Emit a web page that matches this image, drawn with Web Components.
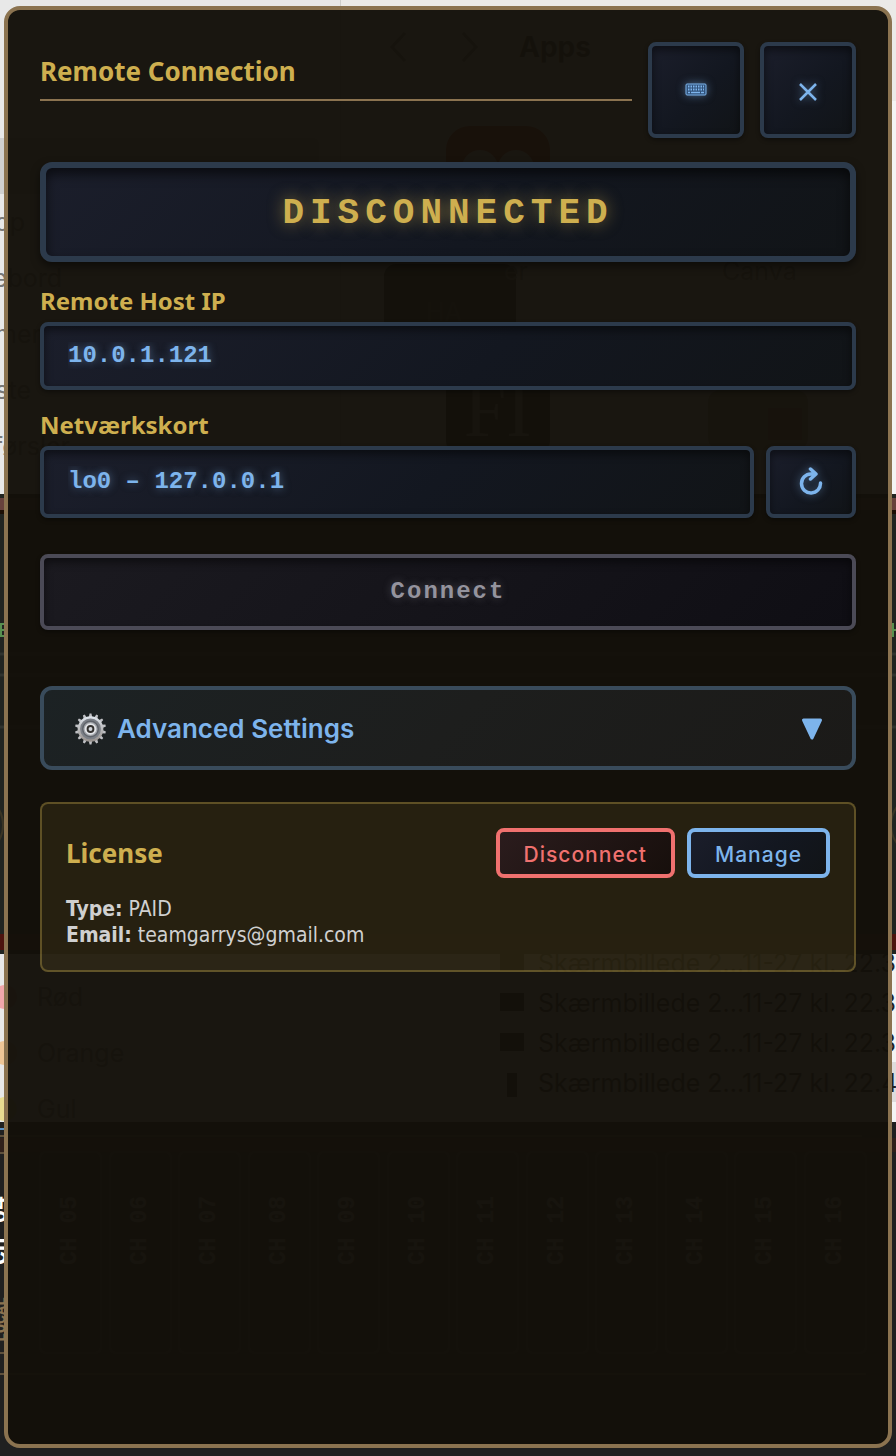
<!DOCTYPE html>
<html lang="da">
<head>
<meta charset="utf-8">
<meta name="viewport" content="width=device-width, initial-scale=1">
<title>Remote Connection</title>
<style>
    * { box-sizing: border-box; }
    body { margin: 0; background: #202020; font-family: "Noto Sans", "Open Sans", sans-serif;
        --gold: #ceaf4f; --blue: #7db4ec; --red: #f0716f; --edge: #2c3a4b; --brass: #8b7350;
        --ui: Inter, "Liberation Sans", sans-serif; --mono: "Liberation Mono", monospace;
        --glass: linear-gradient(135deg, #1b1e2b 0%, #131720 55%, #111417 100%);
        --sunk: inset 0 4px 8px rgba(0,0,0,0.5), 0 2px 4px rgba(0,0,0,0.4); }
</style>
</head>
<body>
<remote-app></remote-app>

<script>
// Windows that lie behind the translucent panel
class DesktopBackdrop extends HTMLElement {
    connectedCallback() {
        const channels = ['05', '06', '07', '08', '09', '10', '11', '12', '13', '14', '15', '16'];
        const strips = channels.map((n, i) => {
            const x = Math.round(40 + i * 69.5);
            return `<rect x="${x}" y="1152" width="61" height="201" rx="6" fill="#202020" stroke="#3a3a38" stroke-width="2"/>
                <text class="ch" transform="translate(${x + 36} 1265) rotate(-90)">CH ${n}</text>`;
        }).join('');
        const files = [963, 1003, 1043, 1083].map((y, i) => `
            <rect x="${i === 3 ? 507 : 500}" y="${y - 10}" width="${i === 3 ? 10 : 24}" height="${i === 3 ? 24 : 18}" fill="#222"/>
            <text x="538" y="${y + 9}" fill="#222">Skærmbillede 2...11-27 kl. 22.${i === 3 ? 4 : 3}</text>`).join('');

        this.attachShadow({ mode: 'open' });
        this.shadowRoot.innerHTML = `
            <style>
                :host { display:block; position:absolute; inset:0; overflow:hidden; z-index:-1; }
                svg { display:block; width:100%; height:100%; }
                text { font-family:var(--ui); font-size:25px; }
                .end { text-anchor:end; fill:#777; }
                .ch { font-family:var(--mono); font-size:23px; font-weight:700; fill:#b0b0b0; }
            </style>
            <svg viewBox="0 0 896 1456" preserveAspectRatio="xMinYMin slice" aria-hidden="true">
                <rect width="896" height="1456" fill="#202020"/>
                <rect width="341" height="494" fill="#e8e8e8"/>
                <rect x="341" width="555" height="494" fill="#ebeae8"/>
                <rect x="340" width="1" height="494" fill="#cfcfcd"/>
                <rect x="341" y="101" width="555" height="393" fill="#f4f4f4"/>
                <rect x="-10" y="138" width="329" height="56" rx="6" fill="#d0d0d0"/>
                <path d="M405 33l-13 14 13 14M463 33l13 14-13 14" fill="none" stroke="#777" stroke-width="3"/>
                <text x="519" y="57" style="font-size:28px" font-weight="700" fill="#444">Apps</text>
                <rect x="446" y="126" width="104" height="104" rx="24" fill="#d32a10"/>
                <circle cx="480" cy="168" r="18" fill="#eee"/><circle cx="516" cy="168" r="18" fill="#eee"/>
                <rect x="384" y="264" width="132" height="92" rx="12" fill="#333"/>
                <text x="528" y="280" class="end">er</text>
                <text x="722" y="280" fill="#777">Canva</text>
                <text x="426" y="321" fill="#666">HA</text>
                <rect x="446" y="340" width="104" height="110" rx="8" fill="#222"/>
                <text x="464" y="436" fill="#999" style="font:76px 'Liberation Serif', serif">FI</text>
                <rect x="708" y="390" width="100" height="60" rx="12" fill="#a09a90"/>
                <rect x="768" y="408" width="34" height="32" fill="#c0392b" opacity="0.5"/>
                <text x="25" y="231" class="end">AirDrop</text>
                <text x="62" y="287" class="end">Skrivebord</text>
                <text x="41" y="343" class="end">Programmer</text>
                <text x="31" y="399" class="end">Seneste</text>
                <text x="70" y="455" class="end">Overførsler</text>

                <rect y="494" width="896" height="460" fill="#212421"/>
                <rect y="498" width="896" height="13" fill="#67413c"/>
                <rect y="510" width="896" height="4" fill="#1c0e04"/>
                <path d="M0 654h896M0 675h896M0 727h896" stroke="#30332f" stroke-width="3"/>
                <path d="M0 624h4M0 630h4M0 636h4M1 623v14M893 623v14M892 630h4" stroke="#589050" stroke-width="2"/>
                <circle cx="-28" cy="825" r="31" fill="none" stroke="#3a3424" stroke-width="2"/>
                <circle cx="922" cy="825" r="31" fill="none" stroke="#3a3424" stroke-width="2"/>
                <rect y="934" width="896" height="16" fill="#4c130e"/>

                <rect y="954" width="470" height="168" fill="#e8e8e8"/>
                <rect x="442" y="954" width="454" height="168" fill="#f4f4f4"/>
                <rect x="466" y="1062" width="430" height="40" fill="#dedcdc"/>
                <circle cx="5" cy="997" r="12" fill="#f2a7ab"/>
                <circle cx="5" cy="1053" r="12" fill="#eec697"/>
                <circle cx="5" cy="1109" r="12" fill="#e9dc91"/>
                <g fill="#777"><text x="37" y="1006">Rød</text><text x="37" y="1062">Orange</text><text x="37" y="1118">Gul</text></g>
                ${files}

                <rect y="1122" width="896" height="334" fill="#202020"/>
                <path d="M0 1129h4" stroke="#5b91c4" stroke-width="2"/>
                <rect y="1138" width="896" height="14" fill="#30201a"/>
                <path d="M0 1136h862M0 1153h4M0 1353h4M0 1374h866" stroke="#8b7350" stroke-width="2" opacity="0.6"/>
                <text class="ch" style="fill:#fff" transform="translate(6 1265) rotate(-90)">CH 04</text>
                <text class="ch" style="fill:#8b7350;font-size:15px" transform="translate(5 1342) rotate(-90)">LOCAL</text>
                ${strips}
            </svg>
        `;
    }
}
customElements.define('desktop-backdrop', DesktopBackdrop);

class IconButton extends HTMLElement {
    connectedCallback() {
        this.attachShadow({ mode: 'open' });
        this.shadowRoot.innerHTML = `
            <style>
                :host { display:block; flex:none; width:96px; height:96px; }
                button { box-sizing:border-box; width:100%; height:100%; padding:0; display:flex; align-items:center; justify-content:center;
                    border:4px solid var(--edge); border-radius:8px; background:var(--glass); box-shadow:var(--sunk);
                    color:var(--blue); cursor:pointer; }
                ::slotted(svg) { display:block; filter:drop-shadow(0 0 4px rgba(125,180,236,0.5)); }
            </style>
            <button type="button" aria-label="${this.getAttribute('label')}"><slot></slot></button>
        `;
    }
}
customElements.define('icon-button', IconButton);

class PanelHeader extends HTMLElement {
    connectedCallback() {
        this.attachShadow({ mode: 'open' });
        this.shadowRoot.innerHTML = `
            <style>
                :host { display:flex; align-items:flex-start; gap:16px; }
                h1 { flex:1; margin:12px 0 0; padding-bottom:11px; border-bottom:2px solid var(--brass);
                    font-size:26px; line-height:34px; font-weight:700; color:var(--gold); }
            </style>
            <h1>Remote Connection</h1>
            <icon-button label="Keyboard">
                <svg width="22" height="22" viewBox="0 0 22 22" fill="none" stroke="currentColor">
                    <rect x="1" y="5" width="20" height="11" rx="1" fill="#31527a" stroke-width="1"/>
                    <path d="M3 7.500h16M3 10.500h16" stroke-dasharray="1.500 1" stroke-width="2"/>
                    <path d="M3 13.500h2M6 13.500h9M16 13.500h3" stroke-width="1.500"/>
                </svg>
            </icon-button>
            <icon-button label="Close">
                <svg width="18" height="22" viewBox="0 0 18 22" fill="none" stroke="currentColor" stroke-width="2.500">
                    <path d="M1 5l16 16M17 5L1 21"/>
                </svg>
            </icon-button>
        `;
    }
}
customElements.define('panel-header', PanelHeader);

class StatusDisplay extends HTMLElement {
    connectedCallback() {
        this.attachShadow({ mode: 'open' });
        this.shadowRoot.innerHTML = `
            <style>
                :host { display:block; box-sizing:border-box; margin-top:24px; padding:26px 20px 22px; border:6px solid var(--edge); border-radius:12px;
                    background:var(--glass); box-shadow:inset 0 6px 12px rgba(0,0,0,0.6), 0 4px 8px rgba(0,0,0,0.5);
                    font:700 36px/40px var(--mono); letter-spacing:6px; text-align:center;
                    color:var(--gold); text-shadow:0 0 16px rgba(206,175,79,0.6); }
            </style>
            <span role="status"><slot></slot></span>
        `;
    }
}
customElements.define('status-display', StatusDisplay);

class ConnectionForm extends HTMLElement {
    connectedCallback() {
        this.attachShadow({ mode: 'open' });
        this.shadowRoot.innerHTML = `
            <style>
                :host { display:block; margin-top:24px; }
                form { display:flex; flex-direction:column; }
                label { font-size:24px; line-height:30px; margin-bottom:6px; font-weight:700; color:var(--gold); }
                input, select { box-sizing:border-box; appearance:none; -webkit-appearance:none; min-width:0; margin:0; padding:0 24px;
                    border:4px solid var(--edge); border-radius:8px; background:var(--glass); box-shadow:var(--sunk);
                    font:700 24px/32px var(--mono); color:var(--blue); text-shadow:0 0 8px rgba(125,180,236,0.5); }
                input { height:68px; margin-bottom:20px; padding-bottom:2px; }
                .row { display:flex; gap:12px; }
                select { flex:1; height:72px; }
                icon-button { width:90px; height:72px; }
                .connect { height:76px; margin-top:36px; padding:0; border:4px solid #4b4a56; border-radius:8px;
                    background:linear-gradient(135deg, #1b1a20, #0f0e14); box-shadow:var(--sunk);
                    font:700 24px/32px var(--mono); letter-spacing:2px; color:#94939d; text-shadow:0 0 8px rgba(148,147,157,0.4); }
            </style>
            <form>
                <label for="host">Remote Host IP</label>
                <input id="host" type="text" value="10.0.1.121">
                <label for="nic">Netværkskort</label>
                <div class="row">
                    <select id="nic"><option>lo0 – 127.0.0.1</option></select>
                    <icon-button label="Refresh">
                        <svg width="26" height="30" viewBox="0 0 26 30" fill="none" stroke="currentColor" stroke-width="3.500" stroke-linecap="round" stroke-linejoin="round">
                            <path d="M17 7H13A9.500 9.500 0 1 0 22.500 16M12.500 2L18 7L12.500 12"/>
                        </svg>
                    </icon-button>
                </div>
                <button class="connect" type="button" disabled>Connect</button>
            </form>
        `;
    }
}
customElements.define('connection-form', ConnectionForm);

class AdvancedToggle extends HTMLElement {
    connectedCallback() {
        const teeth = Array.from({ length: 14 }, (_, i) =>
            `<path d="M15 6l1-5h2l1 5z" transform="rotate(${i * 360 / 14} 17 17)"/>`).join('');

        this.attachShadow({ mode: 'open' });
        this.shadowRoot.innerHTML = `
            <style>
                :host { display:block; margin-top:56px; }
                button { box-sizing:border-box; width:100%; height:84px; padding:2px 26px 0 30px; display:flex; align-items:center; gap:10px;
                    border:4px solid #394b5b; border-radius:12px; background:linear-gradient(135deg, #1c2224, #1d1e1d 50%, #1b1a18);
                    font:600 26px/32px var(--ui); color:var(--blue); cursor:pointer; }
                .name { flex:1; text-align:left; }
                svg { display:block; flex:none; }
            </style>
            <button type="button" aria-expanded="false">
                <svg width="33" height="34" viewBox="0 0 34 34">
                    <defs>
                        <linearGradient id="metal" x1="0" y1="0" x2="0" y2="1">
                            <stop offset="0" stop-color="#dde3ea"/><stop offset="1" stop-color="#98928e"/>
                        </linearGradient>
                    </defs>
                    <g fill="#bfc0c4">${teeth}</g>
                    <circle cx="17" cy="17" r="12" fill="#7c8087" stroke="url(#metal)" stroke-width="2.500"/>
                    <circle cx="17" cy="17" r="8" fill="#a5a8ad" stroke="#60646b" stroke-width="1.500"/>
                    <circle cx="17" cy="17" r="5" fill="#32302e" stroke="#e3e5e8" stroke-width="2"/>
                    <circle cx="17" cy="17" r="2" fill="#d2d5da"/>
                </svg>
                <span class="name">Advanced Settings</span>
                <svg width="28" height="22" viewBox="0 0 28 22" fill="currentColor" stroke="currentColor" stroke-width="3" stroke-linejoin="round">
                    <path d="M5.500 2h17L14 20z"/>
                </svg>
            </button>
        `;
    }
}
customElements.define('advanced-toggle', AdvancedToggle);

class LicenseCard extends HTMLElement {
    connectedCallback() {
        this.attachShadow({ mode: 'open' });
        this.shadowRoot.innerHTML = `
            <style>
                :host { display:block; box-sizing:border-box; margin-top:32px; padding:24px 24px 22px; border:2px solid rgba(206,175,79,0.34); border-radius:8px;
                    background:rgba(206,175,79,0.1); color:#d0d0d0; }
                .top { display:flex; align-items:center; gap:12px; margin-bottom:18px; }
                h2 { flex:1; margin:0; font-size:26px; line-height:34px; color:var(--gold); }
                button { height:50px; padding:4px 24px 0; border:4px solid; border-radius:8px; font:500 21px/28px var(--ui); letter-spacing:1px; cursor:pointer; }
                .off { color:var(--red); background:linear-gradient(135deg, #2b1c1d, #170f0c); }
                .manage { color:var(--blue); background:var(--glass); }
                p { margin:0; font-family:"DejaVu Sans Condensed", "DejaVu Sans", sans-serif; font-size:21px; line-height:26px; }
            </style>
            <div class="top">
                <h2>License</h2>
                <button class="off" type="button">Disconnect</button>
                <button class="manage" type="button">Manage</button>
            </div>
            <p><b>Type:</b> PAID</p>
            <p><b>Email:</b> teamgarrys@gmail.com</p>
        `;
    }
}
customElements.define('license-card', LicenseCard);

class RemoteApp extends HTMLElement {
    connectedCallback() {
        this.attachShadow({ mode: 'open' });
        this.shadowRoot.innerHTML = `
            <style>
                :host { display:flex; position:relative; z-index:0; box-sizing:border-box; min-height:100vh; padding:6px 4px 8px; }
                main { flex:1; min-width:0; box-sizing:border-box; padding:32px; border:4px solid var(--brass); border-radius:16px;
                    background:rgba(19,16,10,0.975); }
            </style>
            <desktop-backdrop></desktop-backdrop>
            <main>
                <panel-header></panel-header>
                <status-display>DISCONNECTED</status-display>
                <connection-form></connection-form>
                <advanced-toggle></advanced-toggle>
                <license-card></license-card>
            </main>
        `;
    }
}
customElements.define('remote-app', RemoteApp);
</script>
</body>
</html>
